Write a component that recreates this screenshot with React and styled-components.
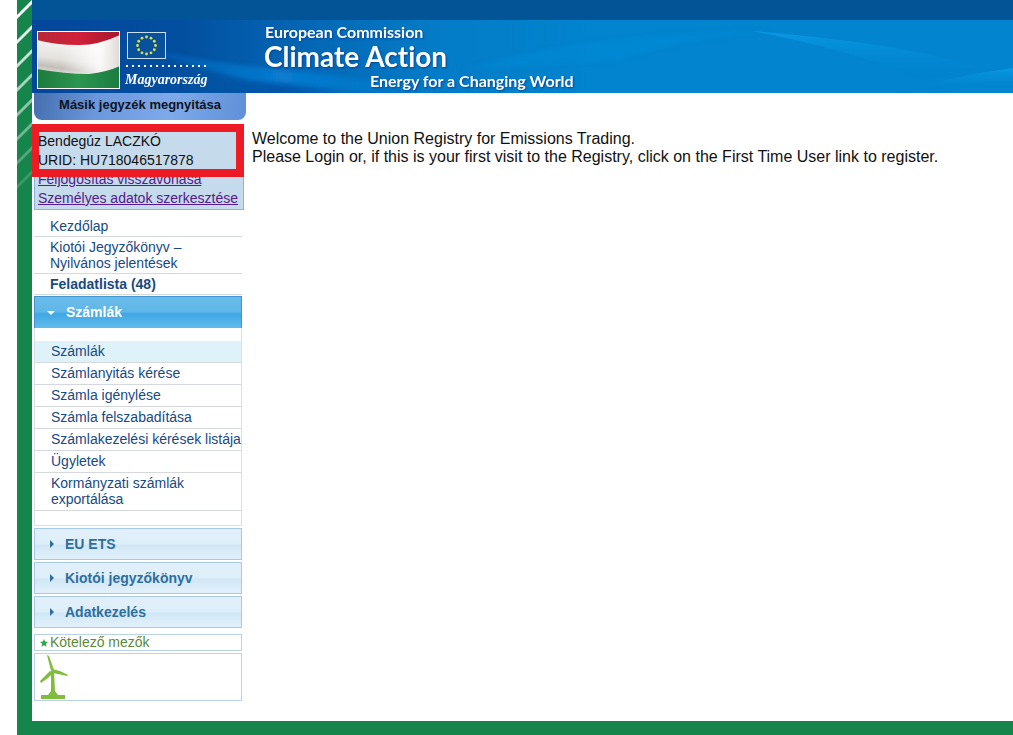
import React from "react";
import styled, { createGlobalStyle, css } from "styled-components";

const GlobalStyle = createGlobalStyle`
  *, *::before, *::after { box-sizing: border-box; }
  html, body { margin: 0; padding: 0; background: #fff; }
  body { font-family: Arial, "Liberation Sans", sans-serif; font-size: 14px; color: #111; }
  ul { list-style: none; margin: 0; padding: 0; }
  h1, h2, p { margin: 0; }
`;

const Page = styled.div`
  display: flex;
  min-height: 100vh;
  padding-left: 17px;
`;

const Rail = styled.div`
  flex: 0 0 15px;
  background: #15854b;
`;

const RailStripes = styled.svg`
  display: block;
  width: 15px;
  height: 210px;
`;

const Body = styled.div`
  flex: 1;
  min-width: 0;
  display: flex;
  flex-direction: column;
`;

const TopBar = styled.div`
  height: 20px;
  background: #035397;
`;

const Banner = styled.header`
  position: relative;
  display: flex;
  height: 73px;
  overflow: hidden;
  background: linear-gradient(90deg, #03479a 0, #034f9f 150px, #0461b0 240px, #047bc6 400px, #0284ce 560px);
`;

const Waves = styled.svg`
  position: absolute;
  inset: 0;
  width: 100%;
  height: 100%;
`;

const Country = styled.div`
  position: relative;
  display: flex;
  gap: 5px;
  width: 232px;
  padding: 11px 0 0 5px;
`;

const FlagHU = styled.svg`
  width: 83px;
  height: 58px;
`;

const CountryText = styled.div`
  display: flex;
  flex-direction: column;
  align-items: flex-start;
  padding-top: 1px;
`;

const FlagEU = styled.svg`
  width: 39px;
  height: 27px;
  margin-left: 2px;
`;

const Dots = styled.svg`
  width: 84px;
  height: 3px;
  margin: 6px 0 4px 1px;
`;

const CountryName = styled.span`
  font: italic bold 14px/16px "Liberation Serif", serif;
  color: #fff;
`;

const Titles = styled.div`
  position: relative;
  display: flex;
  flex-direction: column;
  align-items: flex-start;
  padding-top: 4px;
  color: #fff;
  font-family: Lato, "Open Sans", sans-serif;
  font-weight: bold;
  font-variant-ligatures: none;
  text-shadow: 1px 1px 2px #03479a;
`;

const SmallTitle = styled.p`
  font-size: 16px;
  line-height: 16px;
  padding-left: ${(p) => (p.$indent ? 106 : 1)}px;
`;

const BigTitle = styled.h1`
  font-size: 28px;
  line-height: 33px;
  font-weight: bold;
`;

const Columns = styled.div`
  flex: 1;
  display: flex;
  align-items: flex-start;
  padding: 0 0 20px 2px;
`;

const Sidebar = styled.aside`
  flex: 0 0 212px;
  display: flex;
  flex-direction: column;
`;

const SwitchButton = styled.button`
  height: 27px;
  margin: 0;
  padding: 0 0 4px;
  border: 0;
  border-radius: 0 0 8px 8px;
  background: linear-gradient(100deg, #456fae 0, #6b97dc 30%, #7eaaea 65%, #5f8fd8 100%);
  font: bold 13px/16px "Liberation Sans", sans-serif;
  color: #10131c;
`;

const UserBox = styled.section`
  position: relative;
  width: 210px;
  height: 86px;
  margin-top: 4px;
  padding: 8px 0 0 3px;
  border: 1px solid #8fb2e0;
  border-top: 0;
  background: #c5daea;
  font-size: 14px;
  line-height: 19px;
  white-space: nowrap;
`;

const Highlight = styled.div`
  position: absolute;
  top: 0;
  left: -3px;
  right: -1px;
  height: 53px;
  border: 8px solid #ed1c24;
  border-left-width: 7px;
`;

const UserLine = styled.p`
  position: relative;
`;

const UserLink = styled.a`
  display: block;
  color: #551a8b;
`;

const Nav = styled.nav`
  width: 208px;
  margin-top: 6px;
`;

const itemBase = css`
  display: block;
  line-height: 16px;
  color: #164a83;
  text-decoration: none;
  border-bottom: 1px solid #d5d8dc;
`;

const TopLink = styled.a`
  ${itemBase}
  padding: 2px 16px;
  font-weight: ${(p) => (p.$bold ? "bold" : "normal")};
`;

const GroupButton = styled.button`
  display: flex;
  align-items: center;
  width: 100%;
  height: 32px;
  margin: ${(p) => (p.$open ? 1 : 2)}px 0 0;
  padding: 0 0 1px 12px;
  gap: ${(p) => (p.$open ? 10 : 9)}px;
  border: 1px solid ${(p) => (p.$open ? "#4095cf" : "#a6cae6")};
  border-bottom-width: ${(p) => (p.$open ? 0 : 1)}px;
  background: ${(p) =>
    p.$open
      ? "linear-gradient(#6abdea 0, #5fb6e8 48%, #3fa7e3 54%, #62bbed 100%)"
      : "linear-gradient(#e1eff9 0, #dfeffa 48%, #d1e7f6 54%, #e2f1fb 100%)"};
  color: ${(p) => (p.$open ? "#fff" : "#2e6e9e")};
  font: bold 14px/16px "Liberation Sans", sans-serif;
  text-align: left;
`;

const Arrow = styled.svg`
  width: 9px;
  height: 9px;
  flex: none;
`;

const Panel = styled.ul`
  && { padding: 13px 0 14px; }
  border: 1px solid #dcdfe2;
  border-top: 0;
`;

const PanelLink = styled.a`
  ${itemBase}
  padding: 2px 0 3px 16px;
  background: ${(p) => (p.$current ? "#dff2fa" : "transparent")};
`;

const Required = styled.p`
  display: flex;
  align-items: center;
  gap: 2px;
  width: 208px;
  height: 17px;
  margin-top: 6px;
  padding-left: 5px;
  border: 1px solid #b9d1ea;
  color: #5a8c34;
  line-height: 15px;
`;

const Star = styled.svg`
  width: 8px;
  height: 8px;
`;

const Turbine = styled.div`
  width: 208px;
  height: 48px;
  margin-top: 2px;
  padding: 1px 0 0 5px;
  border: 1px solid #b9d1ea;
`;

const Main = styled.main`
  flex: 1;
  min-width: 0;
  padding: 37px 6px 0;
  font-size: 16px;
  line-height: 18px;
`;

const FooterBar = styled.footer`
  height: 14px;
  background: #15854b;
`;

const accountLinks = [
  "Számlák",
  "Számlanyitás kérése",
  "Számla igénylése",
  "Számla felszabadítása",
  "Számlakezelési kérések listája",
  "Ügyletek",
  "Kormányzati számlák exportálása",
];

const closedGroups = ["EU ETS", "Kiotói jegyzőkönyv", "Adatkezelés"];

function Group({ label, open }) {
  return (
    <GroupButton type="button" $open={open} aria-expanded={!!open}>
      <Arrow viewBox="0 0 9 9" fill="currentColor" aria-hidden="true">
        <path d={open ? "M0 3h8L4 7z" : "M3 1v8l4-4z"} />
      </Arrow>
      {label}
    </GroupButton>
  );
}

function Stripes() {
  const ys = [17, 42, 66, 90, 115, 139, 163, 187];
  return (
    <RailStripes viewBox="0 0 15 210" aria-hidden="true">
      {ys.map((y, i) => (
        <path key={y} d={`M-2 ${y + 2}L17 ${y - 17}`} stroke="#fff" strokeWidth="3" opacity={1 - i * 0.12} />
      ))}
    </RailStripes>
  );
}

function BannerWaves() {
  return (
    <Waves viewBox="0 0 981 73" preserveAspectRatio="none" aria-hidden="true">
      <defs>
        <linearGradient id="beam" x1="0" x2="1">
          <stop offset="0" stopColor="#0b83dc" stopOpacity="0" />
          <stop offset="0.5" stopColor="#0a86dc" stopOpacity="0.7" />
          <stop offset="1" stopColor="#0a86dc" stopOpacity="0" />
        </linearGradient>
        <linearGradient id="crest" x1="0" x2="0" y1="0" y2="1">
          <stop offset="0" stopColor="#0c9de8" stopOpacity="0.8" />
          <stop offset="1" stopColor="#0284ce" stopOpacity="0" />
        </linearGradient>
        <linearGradient id="shade" x1="0" x2="1">
          <stop offset="0" stopColor="#024b9f" stopOpacity="0" />
          <stop offset="0.5" stopColor="#024b9f" stopOpacity="0.6" />
          <stop offset="1" stopColor="#024b9f" stopOpacity="0" />
        </linearGradient>
        <filter id="soft" x="-5%" y="-20%" width="110%" height="140%">
          <feGaussianBlur stdDeviation="2" />
        </filter>
      </defs>
      <g filter="url(#soft)">
        <path d="M80 18Q150 40 235 48T420 73H300Q200 64 80 18Z" fill="url(#beam)" />
        <path d="M150 54Q260 62 360 76H200Q170 66 150 54Z" fill="url(#shade)" />
        <path d="M430 50Q560 12 740 11Q640 20 588 40Q500 46 430 50Z" fill="#0790dc" opacity="0.35" />
      </g>
      <path d="M720 11Q860 22 950 47L890 60Q820 30 720 11Z" fill="url(#crest)" />
      <path d="M860 73Q920 56 981 48V66Q920 66 860 73Z" fill="url(#crest)" />
    </Waves>
  );
}

function HungarianFlag() {
  return (
    <FlagHU viewBox="0 0 83 58" role="img" aria-label="Magyarország">
      <defs>
        <linearGradient id="red" x1="0" x2="1">
          <stop offset="0" stopColor="#b82a36" />
          <stop offset="0.5" stopColor="#d0203a" />
          <stop offset="1" stopColor="#a3182a" />
        </linearGradient>
        <linearGradient id="white" x1="0.2" x2="0" y1="0" y2="1">
          <stop offset="0.2" stopColor="#f1f0ee" />
          <stop offset="0.45" stopColor="#e4e2de" />
          <stop offset="0.6" stopColor="#c2beb8" />
          <stop offset="0.75" stopColor="#eeecea" />
        </linearGradient>
        <linearGradient id="sheen" x1="0" x2="1">
          <stop offset="0.3" stopColor="#fff" stopOpacity="0" />
          <stop offset="0.75" stopColor="#fff" stopOpacity="0.8" />
          <stop offset="1" stopColor="#ddd9d5" />
        </linearGradient>
        <linearGradient id="green" x1="0" x2="1">
          <stop offset="0" stopColor="#1d7a3c" />
          <stop offset="0.5" stopColor="#2c9650" />
          <stop offset="1" stopColor="#1a7c40" />
        </linearGradient>
      </defs>
      <rect width="83" height="58" fill="url(#white)" />
      <rect width="83" height="58" fill="url(#sheen)" />
      <path d="M0 0H83V4Q62 14 42 14Q18 14 0 9Z" fill="url(#red)" />
      <path d="M0 38Q28 43 52 43Q70 41 83 35V58H0Z" fill="url(#green)" />
      <rect x="0.5" y="0.5" width="82" height="57" fill="none" stroke="#fff" />
    </FlagHU>
  );
}

function EuropeanFlag() {
  const stars = Array.from({ length: 12 }, (_, i) => {
    const a = (i * Math.PI) / 6;
    return [19.5 + 9 * Math.cos(a), 13.5 + 8.5 * Math.sin(a)];
  });
  return (
    <FlagEU viewBox="0 0 39 27" role="img" aria-label="EU">
      <rect x="0.5" y="0.5" width="38" height="26" fill="#0a519c" stroke="#c6e0f4" />
      {stars.map(([x, y]) => (
        <circle key={`${x}-${y}`} cx={x} cy={y} r="1.4" fill="#d7e34a" />
      ))}
    </FlagEU>
  );
}

export default function App() {
  return (
    <>
      <GlobalStyle />
      <Page>
        <Rail>
          <Stripes />
        </Rail>
        <Body>
          <TopBar />
          <Banner>
            <BannerWaves />
            <Country>
              <HungarianFlag />
              <CountryText>
                <EuropeanFlag />
                <Dots viewBox="0 0 84 3" fill="#fff" aria-hidden="true">
                  {Array.from({ length: 14 }, (_, i) => (
                    <rect key={i} x={i * 6} y="0" width="2" height="2" />
                  ))}
                </Dots>
                <CountryName>Magyarország</CountryName>
              </CountryText>
            </Country>
            <Titles>
              <SmallTitle>European Commission</SmallTitle>
              <BigTitle>Climate Action</BigTitle>
              <SmallTitle $indent>Energy for a Changing World</SmallTitle>
            </Titles>
          </Banner>
          <Columns>
            <Sidebar>
              <SwitchButton type="button">Másik jegyzék megnyitása</SwitchButton>
              <UserBox>
                <Highlight />
                <UserLine>Bendegúz LACZKÓ</UserLine>
                <UserLine>URID: HU718046517878</UserLine>
                <UserLink href="#revoke">Feljogosítás visszavonása</UserLink>
                <UserLink href="#profile">Személyes adatok szerkesztése</UserLink>
              </UserBox>
              <Nav>
                <TopLink href="#home">Kezdőlap</TopLink>
                <TopLink href="#reports">Kiotói Jegyzőkönyv – Nyilvános jelentések</TopLink>
                <TopLink href="#tasks" $bold>Feladatlista (48)</TopLink>
                <Group label="Számlák" open />
                <Panel>
                  {accountLinks.map((label, i) => (
                    <li key={label}>
                      <PanelLink href="#accounts" $current={i === 0}>{label}</PanelLink>
                    </li>
                  ))}
                </Panel>
                {closedGroups.map((label) => (
                  <Group key={label} label={label} />
                ))}
              </Nav>
              <Required>
                <Star viewBox="0 0 10 10" fill="#2fa84a" aria-hidden="true">
                  <path d="M5 0l1.4 3.2 3.6.4-2.7 2.4.8 3.8L5 7.900 1.900 9.800l.8-3.800L0 3.600l3.600-.4z" />
                </Star>
                Kötelező mezők
              </Required>
              <Turbine>
                <svg width="28" height="44" viewBox="0 0 28 44" fill="#82bc3c" aria-hidden="true">
                  <path d="M11 16h3l1 20 3 4H8l3-4z" />
                  <path d="M1 40h24v4H1z" />
                  <path d="M7 0L9 1 14 15 11 16Z" />
                  <path d="M12 14L20 16 28 20 27 21 13 18Z" />
                  <path d="M13 18L8 23 1 28 0 26 10 16Z" />
                </svg>
              </Turbine>
            </Sidebar>
            <Main>
              <p>Welcome to the Union Registry for Emissions Trading.</p>
              <p>Please Login or, if this is your first visit to the Registry, click on the First Time User link to register.</p>
            </Main>
          </Columns>
          <FooterBar />
        </Body>
      </Page>
    </>
  );
}
